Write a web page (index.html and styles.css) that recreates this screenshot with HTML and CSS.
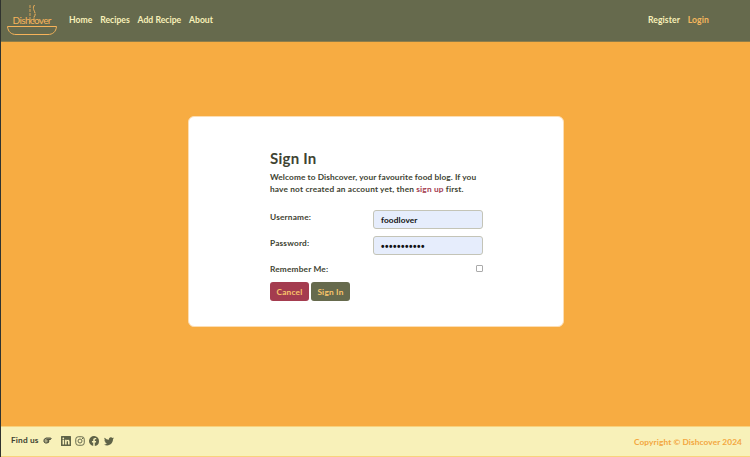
FILE: index.html
```
<!DOCTYPE html>
<html lang="en">
<head>
<meta charset="utf-8">
<title>Dishcover</title>
<link rel="stylesheet" href="styles.css">
</head>
<body>
<header class="navbar">
  <svg class="logo" width="52" height="32" viewBox="0 0 52 32">
    <g fill="none" stroke="#f7b35a" stroke-width="1">
      <path d="M1.5 22.5H50.5C50 28 46.500 30.500 42 30.500H10C5.500 30.500 2 28 1.500 22.500Z"/>
      <path d="M24 1V18" stroke-dasharray="3 1" stroke-width=".8"/>
      <path d="M28.500 1C26.500 4 27.500 5 28.500 7.500S29.500 11 28 13V18" stroke-dasharray="4 .7"/>
    </g>
    <text class="logo-text" x="6.500" y="19.500" textLength="39">Dishcover</text>
  </svg>
  <nav class="links main-links"><a>Home</a><a>Recipes</a><a>Add Recipe</a><a>About</a></nav>
  <nav class="links user-links"><a>Register</a><a class="active">Login</a></nav>
</header>
<main>
  <section class="card">
    <form class="form">
      <h1>Sign In</h1>
      <p class="intro"><span>Welcome to Dishcover, your favourite food blog. If you</span><br><span class="line-two">have not created an account yet, then <a>sign up</a> first.</span></p>
      <div class="row"><label>Username:</label><div class="field">foodlover</div></div>
      <div class="row"><label>Password:</label><div class="field dots">•••••••••••</div></div>
      <div class="row remember"><label>Remember Me:</label><span class="check"></span></div>
      <div class="buttons"><span class="btn cancel">Cancel</span><span class="btn submit">Sign In</span></div>
    </form>
  </section>
</main>
<footer>
  <span class="find">Find us</span>
  <svg class="hand" width="9" height="7" viewBox="0 0 18 14"><path d="M2 5L6 2H15.500Q17.500 3.500 15 5H11V7H12V9H11V11H9V12H5L2 10Z" fill="#a9a783" stroke="#404332" stroke-width="1.800"/><path d="M7 5H11M8 8H11" stroke="#404332" stroke-width="1.500"/></svg>
  <div class="social">
    <svg viewBox="0 0 16 16"><path fill-rule="evenodd" d="M1 0H15Q16 0 16 1V15Q16 16 15 16H1Q0 16 0 15V1Q0 0 1 0ZM2.500 6V13.500H5V6ZM3.700 2.300A1.350 1.350 0 1 0 3.700 5A1.350 1.350 0 0 0 3.700 2.300ZM6.500 6V13.500H9V9.500C9 7.500 11.200 7.500 11.200 9.500V13.500H13.700V9C13.700 5.500 10.200 5 9 7V6Z"/></svg>
    <svg viewBox="0 0 16 16"><g fill="none" stroke="#5f6347" stroke-width="1.500"><rect x="1.200" y="1.200" width="13.600" height="13.600" rx="4"/><circle cx="8" cy="8" r="3.200"/></g><circle cx="12.100" cy="3.900" r="1"/></svg>
    <svg viewBox="0 0 16 16"><path d="M16 8.050A8 8 0 1 0 6.750 16V10.400H4.720V8.050H6.750V6.280C6.750 4.260 7.940 3.150 9.770 3.150C10.640 3.150 11.560 3.310 11.560 3.310V5.290H10.550C9.550 5.290 9.240 5.910 9.240 6.550V8.050H11.460L11.110 10.400H9.240V16A8 8 0 0 0 16 8.050Z"/></svg>
    <svg viewBox="0 0 16 16"><path d="M5.026 15C11.064 15 14.367 9.997 14.367 5.659L14.359 5.234A6.700 6.700 0 0 0 16 3.542A6.600 6.600 0 0 1 14.111 4.060A3.300 3.300 0 0 0 15.555 2.243A6.600 6.600 0 0 1 13.470 3.040A3.290 3.290 0 0 0 7.875 6.030A9.320 9.320 0 0 1 1.114 2.600A3.290 3.290 0 0 0 2.130 6.980A3.200 3.200 0 0 1 .640 6.575A3.290 3.290 0 0 0 3.277 9.837A3.200 3.200 0 0 1 1.794 9.893A3.290 3.290 0 0 0 4.862 12.173A6.600 6.600 0 0 1 0 13.540A9.300 9.300 0 0 0 5.026 15Z"/></svg>
  </div>
  <span class="copy">Copyright © Dishcover 2024</span>
</footer>
</body>
</html>
```
FILE: styles.css
```
* { box-sizing: border-box; }
body {
  margin: 0;
  width: 750px;
  height: 457px;
  display: flex;
  flex-direction: column;
  overflow: hidden;
  border-left: 1px solid #30332f;
  background: #f7ac42;
  color: #404332;
  font: 700 8.300px/12px Lato, sans-serif;
  letter-spacing: .1px;
  white-space: nowrap;
}
.navbar {
  height: 42px;
  display: flex;
  align-items: flex-start;
  background: #666a4d;
  border-bottom: 1px solid #8f7d49;
  padding: 4px 41px 0 5px;
}
.logo { flex: none; }
.logo-text { font: 400 10px Lato, sans-serif; letter-spacing: 0; fill: #f7b35a; }
.links { display: flex; gap: 7.800px; color: #f8f1b9; font-size: 8.600px; padding-top: 10px; }
.main-links { margin-left: 11px; letter-spacing: .03px; }
.user-links { margin-left: auto; }
.active { color: #f5b75e; }
main { flex: 1; padding: 74px 0 0 187px; }
.card {
  width: 376px;
  height: 211px;
  border: 1px solid #fcdeb4;
  border-radius: 6px;
  background: #fff;
  padding: 32px 80px 0 81px;
}
h1 { margin: 0; font: 700 15px/18px Lato, sans-serif; letter-spacing: .25px; }
.intro { margin: 4px 0 15px; }
.intro a { color: #a43c4f; }
.line-two { letter-spacing: .16px; }
.row { height: 26px; display: flex; justify-content: space-between; align-items: flex-start; }
.row label { padding-top: 1px; letter-spacing: .17px; }
.field {
  width: 110px;
  height: 19px;
  border: 1px solid #c4c4b7;
  border-radius: 3px;
  background: #e6edfc;
  color: #111;
  padding: 3px 7px;
}
.dots { font: 700 10px/13px "Liberation Sans", sans-serif; letter-spacing: .5px; }
.remember { height: 20px; }
.check { width: 7px; height: 7px; border: 1px solid #aaa; border-radius: 1px; margin-top: 3px; }
.buttons { display: flex; gap: 2px; }
.btn { width: 39px; height: 19px; border-radius: 3px; text-align: center; line-height: 20px; letter-spacing: .2px; color: #f9c56b; }
.cancel { background: #a43c4f; }
.submit { background: #666a4d; }
footer {
  height: 31px;
  display: flex;
  align-items: flex-start;
  background: #f8f1b9;
  border-top: 1px solid #f9d27c;
  border-bottom: 1px solid #f9d27c;
  padding: 7px 8px 0 10px;
}
.find { width: 28px; letter-spacing: .15px; }
.hand { margin: 3px 0 0 4px; }
.social { display: flex; gap: 4.400px; margin: 2px 0 0 8.500px; fill: #5f6347; }
.social svg { width: 10px; height: 10px; }
.copy { margin: 2px 0 0 auto; color: #f3a63e; }
```
